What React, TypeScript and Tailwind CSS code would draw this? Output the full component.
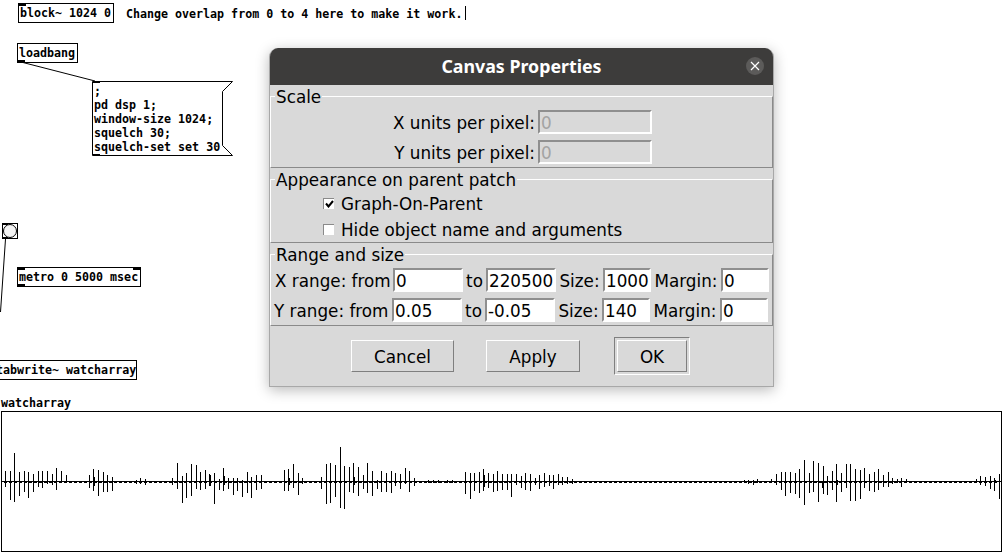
import type { ReactNode } from 'react';

const MONO = 'font-["DejaVu_Sans_Mono",monospace] font-bold text-[11.65px] leading-[14px] text-black whitespace-pre';

// waveform bars as [x, top, bottom], read off three 3x crops of the graph
const STRIP_A = [
  [16, 228, 275], [31, 228, 315], [43, 174, 320], [58, 231, 303], [73, 228, 292], [85, 231, 308], [100, 237, 291],
  [115, 228, 276], [127, 228, 278], [142, 228, 268], [157, 237, 270], [169, 220, 285], [184, 228, 262], [199, 240, 265],
  [268, 240, 278], [280, 222, 288], [283, 245, 272], [295, 225, 303], [310, 231, 291], [322, 240, 291], [337, 246, 288],
  [408, 255, 266], [421, 250, 268], [436, 252, 270], [517, 250, 270], [532, 204, 281], [547, 243, 324], [559, 234, 309],
  [574, 207, 303], [589, 210, 283], [601, 231, 285], [616, 225, 281], [628, 237, 272], [631, 240, 273], [643, 234, 327],
  [658, 252, 285], [670, 219, 288], [673, 243, 270], [685, 249, 282], [700, 249, 300], [712, 249, 288], [727, 255, 306],
  [742, 231, 294], [754, 246, 309], [769, 240, 284], [784, 240, 282], [853, 225, 288], [865, 222, 288], [868, 249, 270],
  [880, 207, 279], [895, 234, 300], [907, 249, 267], [964, 246, 282], [979, 207, 327], [991, 204, 324], [1006, 210, 300],
];
const STRIP_B = [
  [1, 210, 306], [16, 156, 339], [28, 213, 342], [43, 216, 291], [55, 204, 294], [58, 246, 270], [70, 216, 303],
  [85, 240, 282], [97, 204, 294], [112, 228, 303], [127, 255, 282], [139, 228, 291], [154, 234, 291], [169, 228, 294],
  [181, 234, 272], [196, 237, 282], [211, 219, 267], [223, 228, 291], [238, 249, 273], [280, 255, 264], [295, 255, 264],
  [310, 255, 264], [337, 255, 264], [352, 255, 264], [391, 231, 297], [406, 234, 312], [418, 234, 288], [433, 231, 294],
  [445, 222, 288], [448, 240, 276], [460, 234, 279], [475, 237, 291], [487, 228, 288], [502, 237, 285], [517, 237, 285],
  [529, 237, 306], [544, 237, 270], [559, 243, 279], [571, 234, 285], [586, 237, 288], [601, 249, 270], [613, 240, 282],
  [628, 234, 276], [643, 240, 273], [655, 240, 282], [670, 237, 270], [682, 246, 270], [697, 246, 267], [712, 252, 267],
];
const STRIP_C = [
  [232, 255, 264], [244, 255, 267], [259, 255, 270], [271, 252, 264], [313, 252, 264], [328, 237, 270], [343, 231, 285],
  [355, 231, 303], [370, 231, 294], [385, 234, 297], [397, 222, 309], [412, 195, 330], [427, 234, 294], [439, 198, 291],
  [454, 204, 321], [466, 258, 279], [469, 213, 297], [481, 243, 300], [496, 228, 285], [508, 207, 321], [511, 255, 270],
  [523, 234, 291], [538, 207, 279], [550, 207, 318], [565, 222, 318], [580, 225, 312], [592, 219, 279], [607, 237, 288],
  [622, 231, 291], [634, 222, 285], [649, 240, 276], [664, 231, 276], [676, 249, 267], [691, 252, 264], [703, 249, 276],
  [718, 252, 264], [928, 252, 264], [940, 243, 270], [955, 246, 273], [970, 243, 282], [982, 249, 288], [985, 255, 264],
  [997, 237, 312],
];

const toBars = (strip: number[][], offset: number) =>
  strip.map(([x, top, bottom]) => ({
    x: Math.round(x / 3) + offset,
    y: Math.round(top / 3) + 395,
    h: Math.round((bottom - top) / 3),
  }));

const BARS = [...toBars(STRIP_A, 0), ...toBars(STRIP_B, 335), ...toBars(STRIP_C, 667)];

const Waveform = () => (
  <svg className="absolute left-0 top-0" width={1007} height={559} shapeRendering="crispEdges">
    <rect x={1.5} y={411.5} width={1000} height={140} fill="none" stroke="#000" />
    <rect x={2} y={481} width={999} height={1} fill="#000" />
    {Array.from({ length: 199 }).map((_, i) => (
      <rect key={i} x={4 + i * 5} y={482} width={3} height={1} fill="#000" />
    ))}
    {BARS.map((b, i) => (
      <rect key={i} x={b.x} y={b.y} width={1} height={b.h} fill="#000" />
    ))}
  </svg>
);

const Patch = () => (
  <>
    {/* Patch cords and the message box outline */}
    <svg className="absolute left-0 top-0" width={1007} height={559}>
      <line x1={21} y1={62} x2={95} y2={81} stroke="#000" />
      <line x1={5.5} y1={239} x2={0.5} y2={312} stroke="#000" />
      <path d="M92.5 81.5H232.5L222.5 91.5V145.5L232.5 155.5H92.5Z" fill="#fff" stroke="#000" />
      <rect x={465} y={6} width={1} height={14} fill="#000" />
    </svg>

    <div className={`absolute left-[18px] top-[3px] h-[20px] w-[96px] border border-black pl-[1px] pt-[2px] ${MONO}`}>
      block~ 1024 0
      <span className="absolute left-0 top-0 h-[2px] w-[7px] bg-black" />
    </div>
    <div className={`absolute left-[126px] top-[7px] ${MONO}`}>Change overlap from 0 to 4 here to make it work.</div>

    <div className={`absolute left-[17px] top-[43px] h-[20px] w-[61px] border border-black pl-[1px] pt-[2px] ${MONO}`}>
      loadbang
      <span className="absolute bottom-0 left-0 h-[2px] w-[7px] bg-black" />
    </div>

    <span className="absolute left-[93px] top-[81px] h-[2px] w-[7px] bg-black" />
    <span className="absolute left-[93px] top-[154px] h-[2px] w-[7px] bg-black" />
    <div className={`absolute left-[94px] top-[84px] ${MONO}`}>
      {';\npd dsp 1;\nwindow-size 1024;\nsquelch 30;\nsquelch-set set 30'}
    </div>

    <div className="absolute left-[2px] top-[223px] flex h-[16px] w-[16px] items-center justify-center border border-black">
      <span className="h-[14px] w-[14px] rounded-full border border-black bg-[#f4f4f4]" />
      <span className="absolute left-0 top-0 h-[1px] w-[5px] bg-black" />
      <span className="absolute bottom-0 left-0 h-[1px] w-[5px] bg-black" />
    </div>

    <div className={`absolute left-[17px] top-[267px] h-[20px] w-[124px] border border-black pl-[1px] pt-[2px] ${MONO}`}>
      metro 0 5000 msec
      <span className="absolute left-0 top-0 h-[2px] w-[7px] bg-black" />
      <span className="absolute right-0 top-0 h-[2px] w-[7px] bg-black" />
      <span className="absolute bottom-0 left-0 h-[2px] w-[7px] bg-black" />
    </div>

    <div className={`absolute left-[-6px] top-[360px] h-[20px] w-[143px] border border-black pl-[1px] pt-[2px] ${MONO}`}>
      tabwrite~ watcharray
    </div>
    <div className={`absolute left-[1px] top-[396px] ${MONO}`}>watcharray</div>
    <Waveform />
  </>
);

const Group = ({ title, children }: { title: string; children: ReactNode }) => (
  <fieldset className="mx-0 border-x border-b border-t border-b-[#8a8a8a] border-l-white border-r-[#8a8a8a] border-t-white">
    <legend className="ml-[4px] h-[22px] px-[1px] text-[16.8px] leading-[24px]">{title}</legend>
    {children}
  </fieldset>
);

const Entry = ({ value, width, disabled = false }: { value: string; width: string; disabled?: boolean }) => (
  <div
    className={`h-[24px] shrink-0 border-2 border-b-white border-l-[#8f8f8f] border-r-white border-t-[#8f8f8f] pl-[1px] text-[16.8px] leading-[22px] ${width} ${
      disabled ? 'bg-[#d9d9d9] text-[#a3a3a3]' : 'bg-white text-black'
    }`}
  >
    {value}
  </div>
);

const ScaleRow = ({ label }: { label: string }) => (
  <div className="flex h-[24px] items-center justify-end pr-[120px]">
    <span className="mr-[3px] pt-[2px]">{label}</span>
    <Entry value="0" width="w-[114px]" disabled />
  </div>
);

const Check = ({ label, checked = false }: { label: string; checked?: boolean }) => (
  <div className="flex h-[26px] items-center pl-[52px]">
    <span className="mr-[7px] flex h-[11px] w-[11px] items-center justify-center border-l border-t border-l-[#8a8a8a] border-t-[#8a8a8a] bg-white">
      {checked && (
        <svg width={9} height={8} viewBox="0 0 9 8">
          <path d="M1 3.5L3.5 6.5L8 1" fill="none" stroke="#000" strokeWidth={2} />
        </svg>
      )}
    </span>
    <span className="pt-[2px]">{label}</span>
  </div>
);

const RangeRow = ({ values, axis, inset }: { values: string[]; axis: string; inset: string }) => (
  <div className={`flex h-[24px] items-center ${inset}`}>
    <span className="w-[118px] shrink-0 whitespace-nowrap pt-[2px]">{axis} range: from</span>
    <Entry value={values[0]} width="w-[70px]" />
    <span className="w-[23px] shrink-0 pt-[2px] text-center">to</span>
    <Entry value={values[1]} width="w-[70px]" />
    <span className="w-[47px] shrink-0 pt-[2px] text-center">Size:</span>
    <Entry value={values[2]} width="w-[48px]" />
    <span className="w-[70px] shrink-0 whitespace-nowrap pt-[2px] text-center">Margin:</span>
    <Entry value={values[3]} width="w-[48px]" />
  </div>
);

const TkButton = ({ label, width }: { label: string; width: string }) => (
  <button
    className={`h-[32px] border border-b-[#7f7f7f] border-l-white border-r-[#7f7f7f] border-t-white pt-[2px] text-[16.8px] leading-none text-black ${width}`}
  >
    {label}
  </button>
);

const CanvasProperties = () => (
  <div className="absolute left-[269px] top-[48px] flex h-[339px] w-[505px] flex-col overflow-hidden rounded-t-[9px] border-x border-b border-[#a8a8a8] bg-[#d9d9d9] font-['DejaVu_Sans',sans-serif] text-[16.8px] leading-[22px] text-black shadow-[0_3px_14px_rgba(0,0,0,0.28)]">
    <div className="relative flex h-[37px] shrink-0 items-center justify-center bg-[#3d3c3b] pb-[2px] font-['Noto_Sans',sans-serif] text-[17.8px] font-bold text-white">
      Canvas Properties
      <span className="absolute right-[9px] top-[9px] flex h-[18px] w-[18px] items-center justify-center rounded-full bg-[#5c5b5a]">
        <svg width={10} height={10} viewBox="0 0 10 10">
          <path d="M1 1L9 9M9 1L1 9" stroke="#fff" strokeWidth={1.2} />
        </svg>
      </span>
    </div>

    <Group title="Scale">
      <div className="flex flex-col gap-[6px] py-[3px]">
        <ScaleRow label="X units per pixel:" />
        <ScaleRow label="Y units per pixel:" />
      </div>
    </Group>

    <Group title="Appearance on parent patch">
      <Check label="Graph-On-Parent" checked />
      <Check label="Hide object name and arguments" />
    </Group>

    <Group title="Range and size">
      <div className="flex flex-col gap-[6px] py-[3px]">
        <RangeRow axis="X" values={['0', '220500', '1000', '0']} inset="pl-[4px]" />
        <RangeRow axis="Y" values={['0.05', '-0.05', '140', '0']} inset="pl-[3px]" />
      </div>
    </Group>

    <div className="flex items-center pl-[81px] pt-[11px]">
      <TkButton label="Cancel" width="w-[103px]" />
      <span className="ml-[32px]">
        <TkButton label="Apply" width="w-[94px]" />
      </span>
      <span className="ml-[34px] border border-b-white border-l-[#7f7f7f] border-r-white border-t-[#7f7f7f] p-[2px]">
        <TkButton label="OK" width="w-[70px]" />
      </span>
    </div>
  </div>
);

export default function App() {
  return (
    <div className="relative h-[559px] w-[1007px] overflow-hidden bg-white">
      <Patch />
      <CanvasProperties />
    </div>
  );
}
